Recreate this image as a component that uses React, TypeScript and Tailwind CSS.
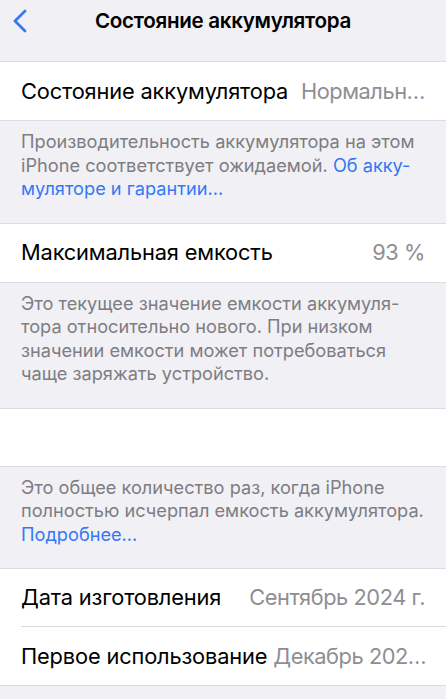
import React from "react";

const font = { fontFamily: "Inter, 'Noto Sans', sans-serif" };

function Row({ label, value, last = true }: { label: string; value?: string; last?: boolean }) {
  return (
    <div className="flex h-[58px] items-center pl-[21px]">
      <div
        className={`flex h-full flex-1 items-center justify-between gap-[6px] pr-[21px] ${
          last ? "" : "border-b border-[#d9d9dd]"
        }`}
      >
        <span className="whitespace-nowrap text-[21.8px] tracking-[-0.15px] text-black">{label}</span>
        {value && (
          <span className="whitespace-nowrap text-[21.8px] tracking-[-0.45px] text-[#8e8e93]">{value}</span>
        )}
      </div>
    </div>
  );
}

function Group({ children }: { children: React.ReactNode }) {
  return <div className="border-y border-[#dcdce0] bg-white">{children}</div>;
}

function Footer({ children }: { children: React.ReactNode }) {
  return (
    <div className="whitespace-nowrap px-[21px] pt-[9px] pb-[22px] text-[18.2px] leading-[23.5px] text-[#7d7d82]">
      {children}
    </div>
  );
}

export default function App() {
  return (
    <div className="h-[699px] w-[446px] overflow-hidden bg-[#f1f0f5]" style={font}>
      <div className="relative flex h-[42px] items-center justify-center">
        <svg
          className="absolute left-[12px] top-[9px]"
          width="16"
          height="24"
          viewBox="0 0 16 24"
          fill="none"
        >
          <path
            d="M13 2 L3 12 L13 22"
            stroke="#3478f6"
            strokeWidth="2.8"
            strokeLinecap="round"
            strokeLinejoin="round"
          />
        </svg>
        <span className="text-[20.6px] font-semibold tracking-[-0.3px] text-black">
          Состояние аккумулятора
        </span>
      </div>

      <div className="h-[19px]" />

      <Group>
        <Row label="Состояние аккумулятора" value="Нормальн…" />
      </Group>
      <Footer>
        Производительность аккумулятора на этом
        <br />
        iPhone соответствует ожидаемой. <span className="text-[#3478f6]">Об акку-</span>
        <br />
        <span className="text-[#3478f6]">муляторе и гарантии…</span>
      </Footer>

      <Group>
        <Row label="Максимальная емкость" value="93 %" />
      </Group>
      <Footer>
        Это текущее значение емкости аккумуля-
        <br />
        тора относительно нового. При низком
        <br />
        значении емкости может потребоваться
        <br />
        чаще заряжать устройство.
      </Footer>

      <Group>
        <div className="h-[57px]" />
      </Group>
      <Footer>
        Это общее количество раз, когда iPhone
        <br />
        полностью исчерпал емкость аккумулятора.
        <br />
        <span className="text-[#3478f6]">Подробнее…</span>
      </Footer>

      <Group>
        <Row label="Дата изготовления" value="Сентябрь 2024 г." last={false} />
        <Row label="Первое использование" value="Декабрь 202…" />
      </Group>
    </div>
  );
}
